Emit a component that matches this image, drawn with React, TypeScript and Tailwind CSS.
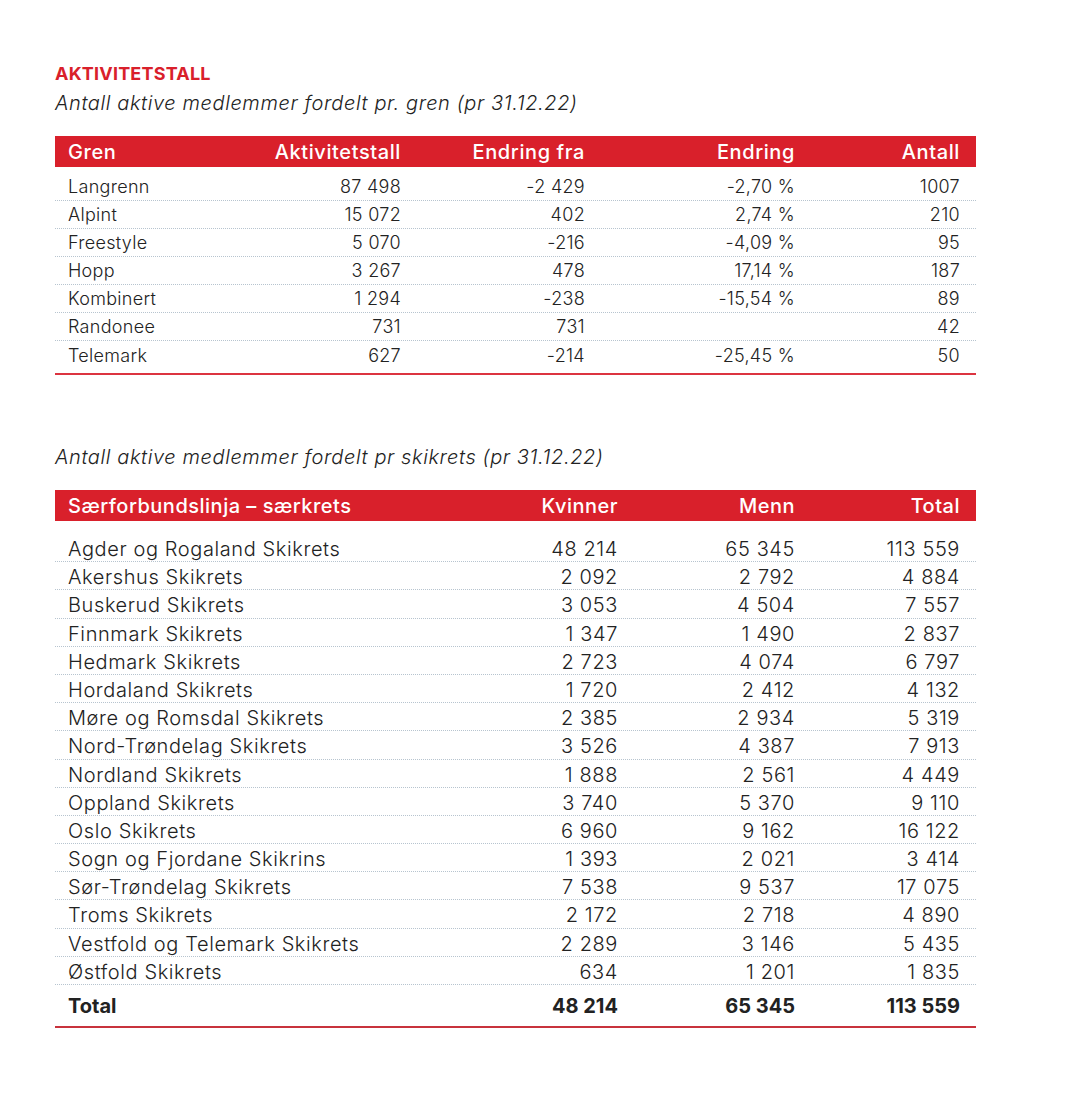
const grenRows = [
  ["Langrenn", "87 498", "-2 429", "-2,70 %", "1007"],
  ["Alpint", "15 072", "402", "2,74 %", "210"],
  ["Freestyle", "5 070", "-216", "-4,09 %", "95"],
  ["Hopp", "3 267", "478", "17,14 %", "187"],
  ["Kombinert", "1 294", "-238", "-15,54 %", "89"],
  ["Randonee", "731", "731", "", "42"],
  ["Telemark", "627", "-214", "-25,45 %", "50"],
];

const kretsRows = [
  ["Agder og Rogaland Skikrets", "48 214", "65 345", "113 559"],
  ["Akershus Skikrets", "2 092", "2 792", "4 884"],
  ["Buskerud Skikrets", "3 053", "4 504", "7 557"],
  ["Finnmark Skikrets", "1 347", "1 490", "2 837"],
  ["Hedmark Skikrets", "2 723", "4 074", "6 797"],
  ["Hordaland Skikrets", "1 720", "2 412", "4 132"],
  ["Møre og Romsdal Skikrets", "2 385", "2 934", "5 319"],
  ["Nord-Trøndelag Skikrets", "3 526", "4 387", "7 913"],
  ["Nordland Skikrets", "1 888", "2 561", "4 449"],
  ["Oppland Skikrets", "3 740", "5 370", "9 110"],
  ["Oslo Skikrets", "6 960", "9 162", "16 122"],
  ["Sogn og Fjordane Skikrins", "1 393", "2 021", "3 414"],
  ["Sør-Trøndelag Skikrets", "7 538", "9 537", "17 075"],
  ["Troms Skikrets", "2 172", "2 718", "4 890"],
  ["Vestfold og Telemark Skikrets", "2 289", "3 146", "5 435"],
  ["Østfold Skikrets", "634", "1 201", "1 835"],
];

export default function App() {
  return (
    <div
      className="w-[1080px] h-[1115px] bg-white text-[#222] pl-[55px] pt-[62px]"
      style={{ fontFamily: "Inter, 'Liberation Sans', sans-serif" }}
    >
      <div className="w-[921px]">
        <h1 className="text-[18px] font-bold text-[#d9202b] leading-[24px] tracking-[0.2px]">
          AKTIVITETSTALL
        </h1>
        <p className="italic font-light text-[20px] leading-[24px] mt-[5px] tracking-[0.6px]">
          Antall aktive medlemmer fordelt pr. gren (pr 31.12.22)
        </p>

        {/* Gren */}
        <div className="mt-[21px]">
          <div className="grid grid-cols-[150px_183px_184px_210px_165px] h-[31px] items-center bg-[#d9202b] text-white text-[20px] font-medium tracking-[0.6px] px-[13px]">
            <div>Gren</div>
            <div className="text-right">Aktivitetstall</div>
            <div className="text-right">Endring fra</div>
            <div className="text-right">Endring</div>
            <div className="text-right">Antall</div>
          </div>
          <div className="pt-[6px]">
            {grenRows.map((r, i) => (
              <div
                key={r[0]}
                className={
                  "grid grid-cols-[150px_183px_184px_210px_165px] h-[28px] items-center px-[13px] text-[18px] font-light tracking-[0.3px] " +
                  (i < grenRows.length - 1 ? "border-b border-dotted border-[#b7c4cf]" : "")
                }
              >
                <div>{r[0]}</div>
                <div className="text-right">{r[1]}</div>
                <div className="text-right">{r[2]}</div>
                <div className="text-right">{r[3]}</div>
                <div className="text-right">{r[4]}</div>
              </div>
            ))}
          </div>
          <div className="mt-[4px] h-[2px] bg-[#dc3440]" />
        </div>

        <p className="italic font-light text-[20px] leading-[24px] mt-[70px] tracking-[0.6px]">
          Antall aktive medlemmer fordelt pr skikrets (pr 31.12.22)
        </p>

        {/* Skikrets */}
        <div className="mt-[21px]">
          <div className="grid grid-cols-[370px_180px_177px_165px] h-[31px] items-center bg-[#d9202b] text-white text-[20px] font-medium tracking-[0.5px] px-[13px]">
            <div>Særforbundslinja – særkrets</div>
            <div className="text-right">Kvinner</div>
            <div className="text-right">Menn</div>
            <div className="text-right">Total</div>
          </div>
          <div className="pt-[13px]">
            {kretsRows.map((r) => (
              <div
                key={r[0]}
                className="grid grid-cols-[370px_180px_177px_165px] h-[28.2px] items-center px-[13px] text-[20px] font-light tracking-[0.6px] border-b border-dotted border-[#b7c4cf]"
              >
                <div>{r[0]}</div>
                <div className="text-right">{r[1]}</div>
                <div className="text-right">{r[2]}</div>
                <div className="text-right">{r[3]}</div>
              </div>
            ))}
            <div className="grid grid-cols-[370px_180px_177px_165px] h-[43px] items-center px-[13px] text-[20px] font-bold border-b-2 border-[#c8323c]">
              <div>Total</div>
              <div className="text-right">48 214</div>
              <div className="text-right">65 345</div>
              <div className="text-right">113 559</div>
            </div>
          </div>
        </div>
      </div>
    </div>
  );
}
